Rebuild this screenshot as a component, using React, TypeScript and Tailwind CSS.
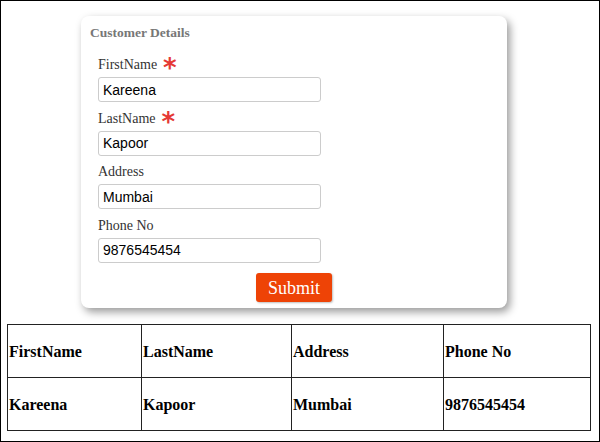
import React from "react";

const fields = [
  { label: "FirstName", value: "Kareena", required: true },
  { label: "LastName", value: "Kapoor", required: true },
  { label: "Address", value: "Mumbai", required: false },
  { label: "Phone No", value: "9876545454", required: false },
];

export default function App() {
  return (
    <div className="w-[600px] h-[442px] border border-black bg-white overflow-hidden font-['Liberation_Serif',serif]">
      <div className="pl-[80px] pt-[15px]">
        <div className="w-[426px] h-[292px] rounded-lg bg-white shadow-[3px_4px_8px_rgba(0,0,0,0.4)] pt-[9px] pl-[9px]">
          <div className="text-[13.5px] font-bold text-[#777] leading-[16px]">Customer Details</div>
          <div className="pl-[8px] pt-[14px] flex flex-col">
            {fields.map((f) => (
              <div key={f.label} className="h-[53.5px] flex flex-col">
                <div className="flex items-center h-[20px] text-[14px] text-[#333] leading-[16px]">
                  {f.label}
                  {f.required && (
                    <span className="ml-[6px] text-[#e53935] text-[26px] font-bold leading-none mt-[6px] font-['DejaVu_Sans',sans-serif]">*</span>
                  )}
                </div>
                <input
                  readOnly
                  value={f.value}
                  className="mt-[2px] w-[223px] h-[25px] border border-[#ccc] rounded-[3px] px-[4px] text-[14px] text-black font-['Liberation_Sans',sans-serif] outline-none"
                />
              </div>
            ))}
          </div>
          <div className="flex justify-center pr-[9px] mt-[4px]">
            <button className="w-[76px] h-[29px] rounded-[3px] bg-[#ee4306] text-white text-[18px] leading-none shadow-[1px_1px_2px_rgba(0,0,0,0.25)]">
              Submit
            </button>
          </div>
        </div>
      </div>
      <div className="pl-[6px] pt-[16px]">
        <table className="w-[584px] border-collapse text-[16px] font-bold text-black">
          <tbody>
            <tr className="h-[53px]">
              <td className="border border-[#222] w-[134px] pl-[1px] pt-[2px]">FirstName</td>
              <td className="border border-[#222] w-[150px] pl-[1px] pt-[2px]">LastName</td>
              <td className="border border-[#222] w-[152px] pl-[1px] pt-[2px]">Address</td>
              <td className="border border-[#222] pl-[1px] pt-[2px]">Phone No</td>
            </tr>
            <tr className="h-[53px]">
              <td className="border border-[#222] pl-[1px] pt-[2px]">Kareena</td>
              <td className="border border-[#222] pl-[1px] pt-[2px]">Kapoor</td>
              <td className="border border-[#222] pl-[1px] pt-[2px]">Mumbai</td>
              <td className="border border-[#222] pl-[1px] pt-[2px]">9876545454</td>
            </tr>
          </tbody>
        </table>
      </div>
    </div>
  );
}
